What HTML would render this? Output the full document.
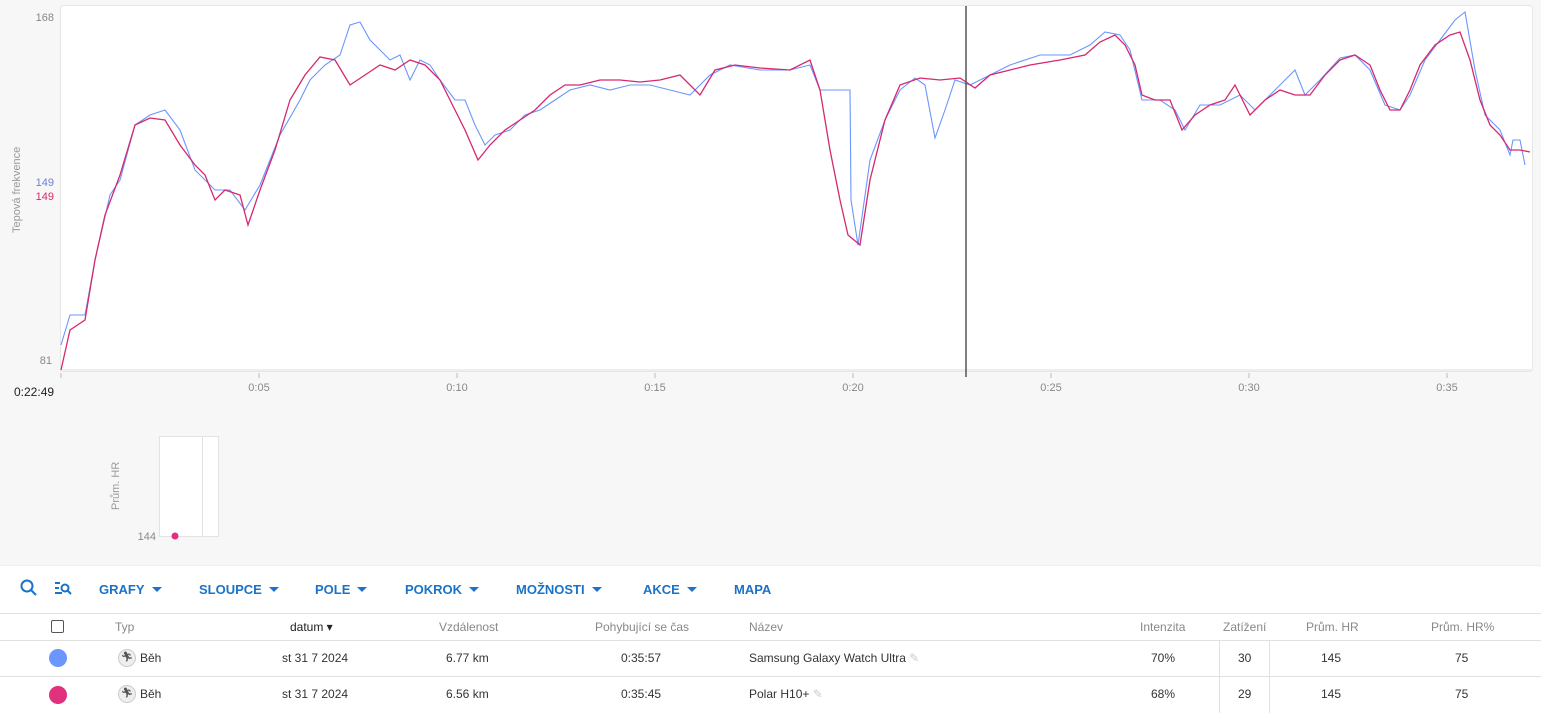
<!DOCTYPE html>
<html><head><meta charset="utf-8"><style>
body{margin:0;width:1541px;height:713px;background:#f7f7f7;font-family:"Liberation Sans",sans-serif;position:relative;overflow:hidden}
.a{position:absolute}
.tb{color:#1a73c8;font-size:13px;font-weight:bold;top:582px}
.tri{display:inline-block;width:0;height:0;border-left:5px solid transparent;border-right:5px solid transparent;border-top:5px solid #1a73c8;margin-left:7px;vertical-align:2px}
.h{font-size:12px;color:#888;top:620px}
.c{font-size:12px;color:#333}
.ln{position:absolute;left:0;width:1541px;height:1px;background:#e0e0e0}
</style></head><body>
<svg class="a" style="left:0;top:0" width="1541" height="400">
<rect x="60.5" y="5.5" width="1472" height="366" rx="3" fill="#fff" stroke="#e6e6e6"/>
<line x1="60" y1="370" x2="1532" y2="370" stroke="#eee" stroke-width="2"/>
<g stroke="#bbb"><line x1="61" y1="373" x2="61" y2="378"/><line x1="259" y1="373" x2="259" y2="378"/><line x1="457" y1="373" x2="457" y2="378"/><line x1="655" y1="373" x2="655" y2="378"/><line x1="853" y1="373" x2="853" y2="378"/><line x1="1051" y1="373" x2="1051" y2="378"/><line x1="1249" y1="373" x2="1249" y2="378"/><line x1="1447" y1="373" x2="1447" y2="378"/></g>
<g font-size="11" fill="#888" text-anchor="middle"><text x="259" y="391">0:05</text><text x="457" y="391">0:10</text><text x="655" y="391">0:15</text><text x="853" y="391">0:20</text><text x="1051" y="391">0:25</text><text x="1249" y="391">0:30</text><text x="1447" y="391">0:35</text></g>
<text x="14" y="396" font-size="12" fill="#222">0:22:49</text>
<g font-size="11" text-anchor="end"><text x="54" y="21" fill="#888">168</text><text x="54" y="186" fill="#6b7fd6">149</text><text x="54" y="200" fill="#d6286e">149</text><text x="52" y="364" fill="#888">81</text></g>
<text transform="translate(20,233) rotate(-90)" font-size="11" fill="#999">Tepová frekvence</text>
<polyline fill="none" stroke="#6b96ff" stroke-width="1.1" points="61,345 70,315 85,315 95,260 110,195 120,180 135,125 150,115 165,110 180,130 195,170 215,190 230,190 245,210 260,185 280,135 300,100 310,80 325,65 340,55 350,25 360,22 370,40 380,50 390,60 400,55 410,80 420,60 430,65 440,80 455,100 465,100 475,125 485,145 495,135 510,130 525,115 540,110 555,100 570,90 590,85 610,90 630,85 650,85 670,90 690,95 710,75 730,65 760,70 790,70 810,65 820,90 850,90 851,200 858,245 870,160 885,120 900,90 915,78 925,85 935,138 945,110 955,80 970,85 990,75 1010,65 1040,55 1070,55 1090,45 1105,32 1120,35 1130,50 1142,100 1160,100 1175,110 1185,130 1200,105 1220,105 1240,95 1255,110 1270,95 1285,80 1295,70 1305,95 1320,80 1340,58 1355,55 1370,70 1385,105 1400,110 1410,95 1425,60 1440,40 1455,20 1465,12 1475,70 1485,115 1500,130 1510,155 1513,140 1520,140 1525,165"/>
<polyline fill="none" stroke="#d6286e" stroke-width="1.3" points="61,370 70,330 85,320 95,260 105,215 120,175 135,125 150,118 165,120 180,145 195,165 205,175 215,200 225,190 240,195 248,225 260,190 275,150 290,100 305,75 320,57 335,60 350,85 365,75 380,65 395,70 410,60 425,65 440,80 455,110 465,130 478,160 490,145 505,130 520,120 535,110 550,95 565,85 580,85 600,80 620,80 640,82 660,80 680,75 700,95 715,70 735,65 760,68 790,70 810,60 820,90 830,150 840,200 848,235 860,245 870,180 885,120 900,85 920,78 940,80 960,78 975,88 990,75 1010,70 1030,65 1060,60 1085,55 1100,42 1115,35 1125,45 1135,65 1142,95 1155,100 1170,100 1182,130 1195,115 1210,105 1225,100 1235,85 1250,115 1265,100 1280,90 1295,95 1310,95 1325,75 1340,60 1355,55 1370,65 1380,90 1390,110 1400,110 1410,90 1420,65 1435,45 1450,35 1460,32 1470,60 1480,100 1490,125 1500,135 1510,150 1520,150 1530,152"/>
<line x1="966" y1="6" x2="966" y2="377" stroke="#555" stroke-width="1.5"/>
</svg>
<svg class="a" style="left:100px;top:430px" width="130" height="120">
<rect x="59.5" y="6.5" width="59" height="100" fill="#fff" stroke="#e3e3e3"/>
<line x1="102.5" y1="6" x2="102.5" y2="106" stroke="#e3e3e3"/>
<circle cx="75" cy="106" r="3.5" fill="#e0307e"/>
<text x="56" y="110" font-size="11" fill="#888" text-anchor="end">144</text>
<text transform="translate(19,80) rotate(-90)" font-size="11" fill="#999">Prům. HR</text>
</svg>
<div class="a" style="left:0;top:565px;width:1541px;height:148px;background:#fff"></div>
<div class="ln" style="top:565px;background:#eee"></div>
<svg class="a" style="left:19px;top:578px" width="60" height="22" fill="none" stroke="#1a73c8" stroke-width="2">
<circle cx="8" cy="8" r="5.5"/><line x1="12" y1="12" x2="17" y2="17"/>
<line x1="36" y1="5" x2="41" y2="5"/><line x1="36" y1="10" x2="40" y2="10"/><line x1="36" y1="15" x2="43" y2="15"/><circle cx="46" cy="10" r="3.5"/><line x1="48.5" y1="12.5" x2="52" y2="16"/>
</svg>
<div class="a tb" style="left:99px">GRAFY<span class="tri"></span></div>
<div class="a tb" style="left:199px">SLOUPCE<span class="tri"></span></div>
<div class="a tb" style="left:315px">POLE<span class="tri"></span></div>
<div class="a tb" style="left:405px">POKROK<span class="tri"></span></div>
<div class="a tb" style="left:516px">MOŽNOSTI<span class="tri"></span></div>
<div class="a tb" style="left:643px">AKCE<span class="tri"></span></div>
<div class="a tb" style="left:734px">MAPA</div>
<div class="ln" style="top:613px"></div>
<div class="ln" style="top:640px"></div>
<div class="ln" style="top:676px"></div>
<div class="a" style="left:1219px;top:640px;width:1px;height:73px;background:#e0e0e0"></div>
<div class="a" style="left:1269px;top:640px;width:1px;height:73px;background:#e0e0e0"></div>
<div class="a" style="left:51px;top:620px;width:11px;height:11px;border:1px solid #555;border-radius:2px"></div>
<div class="a h" style="left:115px">Typ</div>
<div class="a h" style="left:290px;color:#222">datum ▾</div>
<div class="a h" style="left:439px">Vzdálenost</div>
<div class="a h" style="left:595px">Pohybující se čas</div>
<div class="a h" style="left:749px">Název</div>
<div class="a h" style="left:1140px">Intenzita</div>
<div class="a h" style="left:1223px">Zatížení</div>
<div class="a h" style="left:1306px">Prům. HR</div>
<div class="a h" style="left:1431px">Prům. HR%</div>
<div class="a" style="left:49px;top:649px;width:18px;height:18px;border-radius:50%;background:#6b96ff"></div>
<div class="a" style="left:49px;top:686px;width:18px;height:18px;border-radius:50%;background:#e0307e"></div>
<div class="a" style="left:118px;top:649px;width:16px;height:16px;border-radius:50%;background:#eee;border:1px solid #ccc;font-size:10px;text-align:center;line-height:16px;color:#555">🏃︎</div>
<div class="a" style="left:118px;top:685px;width:16px;height:16px;border-radius:50%;background:#eee;border:1px solid #ccc;font-size:10px;text-align:center;line-height:16px;color:#555">🏃︎</div>
<div class="a c" style="left:140px;top:651px">Běh</div><div class="a c" style="left:140px;top:687px">Běh</div>
<div class="a c" style="left:282px;top:651px">st 31 7 2024</div><div class="a c" style="left:282px;top:687px">st 31 7 2024</div>
<div class="a c" style="left:446px;top:651px">6.77 km</div><div class="a c" style="left:446px;top:687px">6.56 km</div>
<div class="a c" style="left:621px;top:651px">0:35:57</div><div class="a c" style="left:621px;top:687px">0:35:45</div>
<div class="a c" style="left:749px;top:651px">Samsung Galaxy Watch Ultra <span style="color:#ccc">✎</span></div><div class="a c" style="left:749px;top:687px">Polar H10+ <span style="color:#ccc">✎</span></div>
<div class="a c" style="left:1151px;top:651px">70%</div><div class="a c" style="left:1151px;top:687px">68%</div>
<div class="a c" style="left:1238px;top:651px">30</div><div class="a c" style="left:1238px;top:687px">29</div>
<div class="a c" style="left:1321px;top:651px">145</div><div class="a c" style="left:1321px;top:687px">145</div>
<div class="a c" style="left:1455px;top:651px">75</div><div class="a c" style="left:1455px;top:687px">75</div>
</body></html>
